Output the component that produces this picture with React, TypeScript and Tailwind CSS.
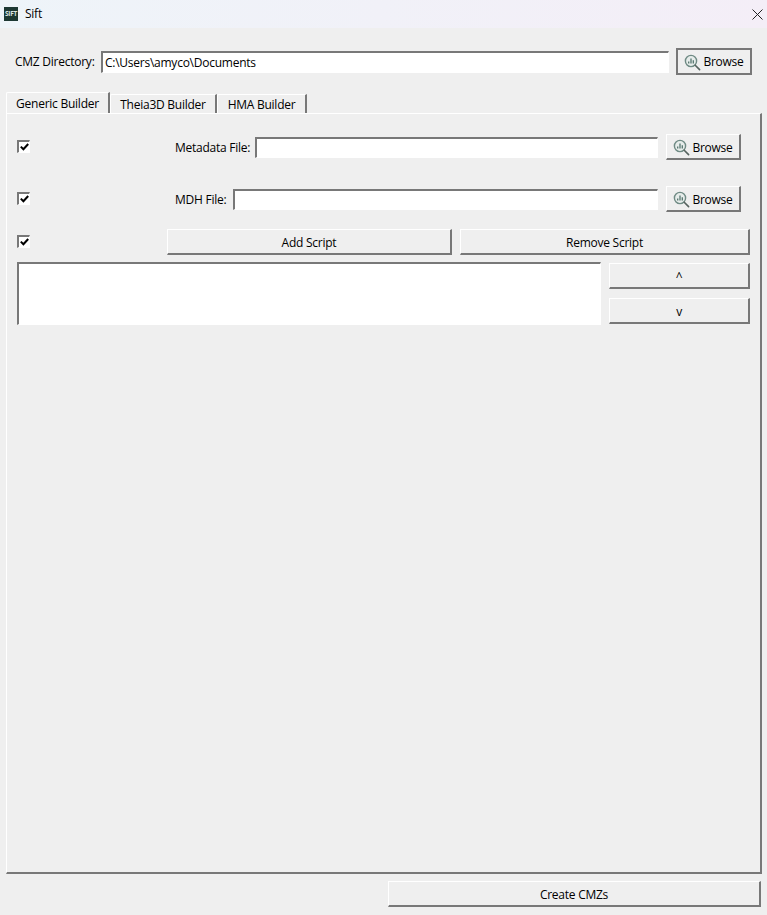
import React from 'react';

const raised = "border border-t-white border-l-white border-r-2 border-b-2 border-r-[#787878] border-b-[#787878] bg-[#efefef] flex items-center justify-center pt-[2px]";
const sunken = "border border-t-2 border-l-2 border-t-[#787878] border-l-[#787878] border-r-white border-b-white bg-white";

const BrowseIcon = () => (
  <svg width="17" height="17" viewBox="0 0 17 17" fill="none" className="shrink-0">
    <circle cx="7" cy="7" r="5.6" stroke="#6f8a84" strokeWidth="1.4" fill="#e6ecea" />
    <path d="M11.2 11.2 L15.6 15.6" stroke="#56635f" strokeWidth="1.6" strokeLinecap="round" />
    <path d="M4.7 9.4V7.4M7 9.4V4.6M9.3 9.4V6.2" stroke="#55756e" strokeWidth="1.3" />
  </svg>
);

const BrowseButton = ({ className }: { className: string }) => (
  <button className={`${raised} gap-[2px] h-[26px] w-[75px] shrink-0 ${className}`}>
    <BrowseIcon />
    <span>Browse</span>
  </button>
);

const Check = () => (
  <div className="w-[13px] h-[13px] mb-[1px] shrink-0 border border-t-2 border-l-2 border-t-[#787878] border-l-[#787878] border-r-white border-b-white bg-white flex items-center justify-center">
    <svg width="9" height="8" viewBox="0 0 9 8" fill="none">
      <path d="M0.8 3.6 L3.4 6.2 L8.2 1" stroke="#000" strokeWidth="2" />
    </svg>
  </div>
);

const App = () => {
  return (
    <div className="w-[767px] h-[915px] flex flex-col bg-[#efefef] text-[12px] tracking-[-0.25px] leading-[16px] text-black overflow-hidden font-['Open_Sans','Noto_Sans',sans-serif]">
      {/* Title bar */}
      <div className="h-[28px] shrink-0 flex items-center pl-[4px] pr-[4px] bg-gradient-to-r from-[#eef4f9] to-[#f4eef7]">
        <div className="w-[14px] h-[14px] bg-[#1d3833] flex items-center justify-center text-[6.5px] tracking-[-0.3px] leading-none font-bold text-[#d9e6e2] overflow-hidden">SIFT</div>
        <span className="ml-[7px] pb-[1px]">Sift</span>
        <svg width="11" height="11" viewBox="0 0 11 11" className="ml-auto" fill="none">
          <path d="M0.5 0.5L10.5 10.5M10.5 0.5L0.5 10.5" stroke="#222" strokeWidth="1" />
        </svg>
      </div>

      {/* Directory row */}
      <div className="h-[27px] mt-[20px] shrink-0 flex items-center pl-[15px]">
        <span className="w-[86px] shrink-0 pt-[1px]">CMZ Directory:</span>
        <div className={`${sunken} w-[568px] h-[22px] flex items-center pl-[2px] pt-[1px]`}>C:\Users\amyco\Documents</div>
        <button className="ml-[7px] w-[76px] h-[27px] border-2 border-[#787878] bg-[#efefef] flex items-center justify-center gap-[2px] pt-[1px]">
          <BrowseIcon />
          <span>Browse</span>
        </button>
      </div>

      {/* Tabs */}
      <div className="h-[21px] mt-[17px] shrink-0 flex items-end pl-[6px]">
        <div className="w-[104px] h-[21px] border-t border-l border-white border-r-2 border-r-[#787878] rounded-tl-[2px] flex items-center justify-center pt-[1px]">Generic Builder</div>
        <div className="w-[107px] h-[19px] border-t border-l border-white border-r-2 border-r-[#787878] rounded-tl-[2px] flex items-center justify-center pt-[1px]">Theia3D Builder</div>
        <div className="w-[90px] h-[19px] border-t border-l border-white border-r-2 border-r-[#787878] rounded-tl-[2px] flex items-center justify-center pt-[1px]">HMA Builder</div>
      </div>

      {/* Tab panel */}
      <div className="ml-[6px] w-[756px] h-[761px] shrink-0 border-l border-t border-white border-r-2 border-r-[#787878] border-b-2 border-b-[#787878] pl-[10px]">
        <div className="h-[26px] mt-[20px] flex items-center">
          <Check />
          <span className="ml-[145px] w-[80px] shrink-0 pt-[1px]">Metadata File:</span>
          <div className={`${sunken} w-[403px] h-[21px]`} />
          <BrowseButton className="ml-[8px]" />
        </div>

        <div className="h-[26px] mt-[26px] flex items-center">
          <Check />
          <span className="ml-[145px] w-[58px] shrink-0 pt-[1px]">MDH File:</span>
          <div className={`${sunken} w-[425px] h-[21px]`} />
          <BrowseButton className="ml-[8px]" />
        </div>

        <div className="h-[26px] mt-[17px] flex items-center">
          <Check />
          <button className={`${raised} ml-[137px] w-[285px] h-[26px]`}>Add Script</button>
          <button className={`${raised} ml-[8px] w-[290px] h-[26px]`}>Remove Script</button>
        </div>

        <div className="mt-[7px] flex">
          <div className={`${sunken} w-[584px] h-[63px]`} />
          <div className="ml-[8px] flex flex-col pt-[1px] gap-[9px]">
            <button className={`${raised} w-[141px] h-[26px]`}>^</button>
            <button className={`${raised} w-[141px] h-[26px]`}>v</button>
          </div>
        </div>
      </div>

      {/* Footer */}
      <div className="mt-[7px] pl-[388px]">
        <button className={`${raised} w-[373px] h-[26px]`}>Create CMZs</button>
      </div>
    </div>
  );
};

export default App;
